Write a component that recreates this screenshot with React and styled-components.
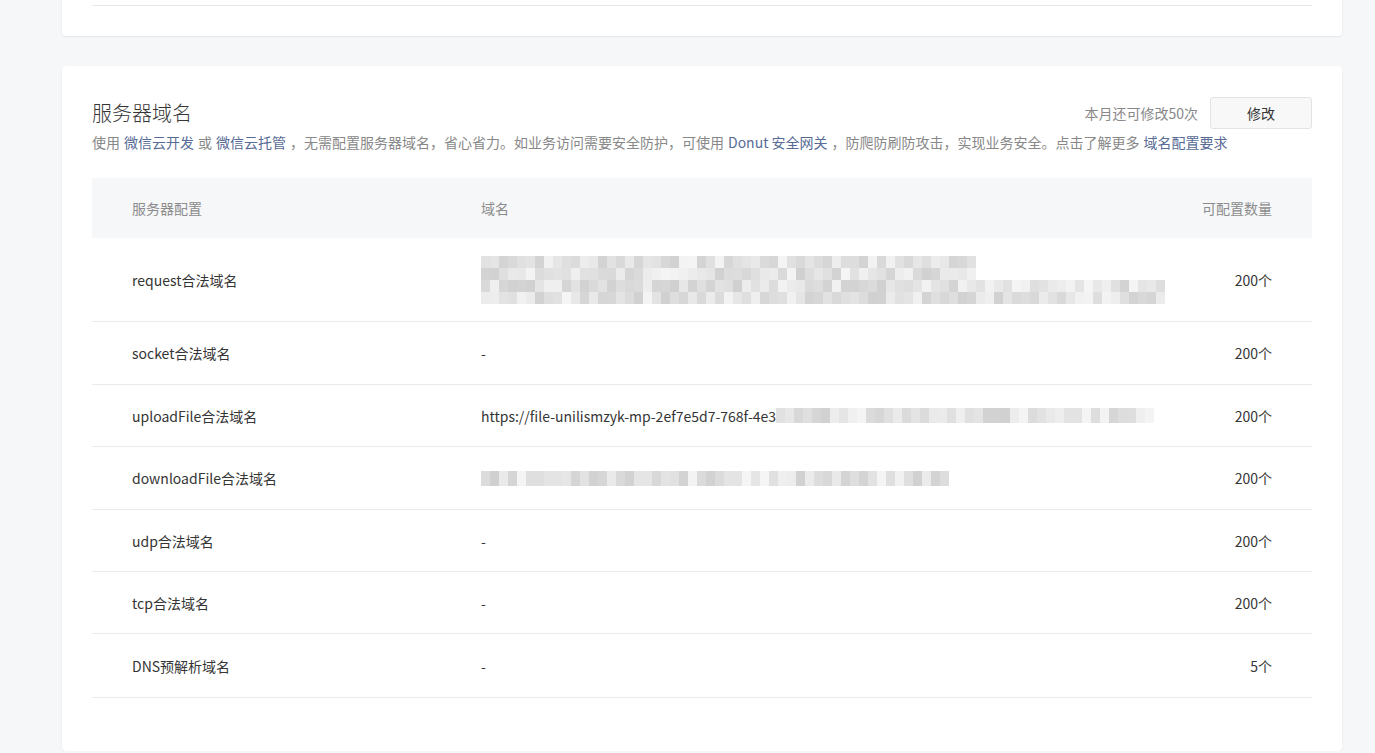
import styled, { createGlobalStyle } from 'styled-components';

const GlobalStyle = createGlobalStyle`
  html, body {
    margin: 0;
    padding: 0;
    background: #f6f7f9;
    font-family: "Noto Sans CJK SC", "Noto Sans", sans-serif;
    color: #353535;
    overflow: hidden;
  }
`;

const Page = styled.div`
  padding-left: 62px;
  width: 1280px;
  display: flex;
  flex-direction: column;
  gap: 30px;
`;

const Card = styled.section`
  background: #fff;
  border-radius: 4px;
  box-shadow: 0 1px 2px rgba(0, 0, 0, 0.08);
  padding: ${(p) => p.$pad};
  margin-top: ${(p) => p.$offset || 0};
`;

const Divider = styled.div`
  height: 15px;
  border-bottom: 1px solid #e7e7e7;
`;

const Head = styled.div`
  display: flex;
  align-items: center;
  justify-content: space-between;
`;

const Title = styled.h2`
  margin: 0;
  font-size: 20px;
  font-weight: 300;
  line-height: 30px;
  color: #353535;
`;

const Quota = styled.div`
  display: flex;
  align-items: center;
  gap: 12px;
  font-size: 14px;
  color: #888;
`;

const Button = styled.button`
  width: 102px;
  height: 32px;
  border: 1px solid #e3e3e3;
  border-radius: 3px;
  background: #f8f8f8;
  color: #353535;
  font-family: inherit;
  font-size: 14px;
`;

const Desc = styled.p`
  margin: 3px 0 0;
  font-size: 14px;
  line-height: 20px;
  color: #888;
`;

const Link = styled.a`
  color: #576b95;
  text-decoration: none;
  margin: 0 4px;
`;

const Table = styled.div`
  margin-top: 26px;
`;

const Row = styled.div`
  display: grid;
  grid-template-columns: 389px 1fr 140px;
  align-items: center;
  box-sizing: border-box;
  height: ${(p) => p.$h}px;
  font-size: 14px;
  color: ${(p) => (p.$header ? '#8c8c8c' : '#353535')};
  background: ${(p) => (p.$header ? '#f6f7f9' : '#fff')};
  border-bottom: ${(p) => (p.$header ? 'none' : '1px solid #eaeaea')};
`;

const Cell = styled.div`
  padding-left: ${(p) => (p.$first ? '40px' : '0')};
  padding-right: ${(p) => (p.$last ? '40px' : '0')};
  display: flex;
  align-items: center;
  justify-content: ${(p) => (p.$last ? 'flex-end' : 'flex-start')};
  white-space: nowrap;
  overflow: hidden;
`;

function rand(seed) {
  let s = seed;
  return () => {
    s = (s * 9301 + 49297) % 233280;
    return s / 233280;
  };
}

// pixelated stand-in for the blurred domain values
function Mosaic({ bands, seed }) {
  const r = rand(seed);
  const cw = 9;
  let y = 0;
  const rects = [];
  bands.forEach((b) => {
    for (let row = 0; row < b.rows; row++) {
      for (let c = 0; c < Math.ceil(b.width / cw); c++) {
        const v = Math.round(208 + r() * 37);
        rects.push(
          <rect
            key={`${y}-${c}`}
            x={c * cw}
            y={y}
            width={cw}
            height={b.h}
            fill={`rgb(${v},${v},${v})`}
          />
        );
      }
      y += b.h;
    }
  });
  const w = Math.max(...bands.map((b) => b.width));
  return (
    <svg width={w} height={y} style={{ display: 'block' }}>
      {rects}
    </svg>
  );
}

const rows = [
  {
    name: 'request合法域名',
    h: 84,
    domain: (
      <Mosaic
        seed={7}
        bands={[
          { width: 491, rows: 2, h: 12 },
          { width: 684, rows: 2, h: 12 },
        ]}
      />
    ),
    count: '200个',
  },
  { name: 'socket合法域名', h: 63, domain: '-', count: '200个' },
  {
    name: 'uploadFile合法域名',
    h: 62,
    domain: (
      <>
        <span>https://file-unilismzyk-mp-2ef7e5d7-768f-4e3</span>
        <Mosaic seed={31} bands={[{ width: 378, rows: 1, h: 15 }]} />
      </>
    ),
    count: '200个',
  },
  {
    name: 'downloadFile合法域名',
    h: 63,
    domain: <Mosaic seed={53} bands={[{ width: 468, rows: 1, h: 15 }]} />,
    count: '200个',
  },
  { name: 'udp合法域名', h: 62, domain: '-', count: '200个' },
  { name: 'tcp合法域名', h: 62, domain: '-', count: '200个' },
  { name: 'DNS预解析域名', h: 64, domain: '-', count: '5个' },
];

export default function App() {
  return (
    <>
      <GlobalStyle />
      <Page>
        <Card $pad="0 30px 30px" $offset="-10px">
          <Divider />
        </Card>
        <Card $pad="31px 30px 53px">
          <Head>
            <Title>服务器域名</Title>
            <Quota>
              本月还可修改50次
              <Button>修改</Button>
            </Quota>
          </Head>
          <Desc>
            使用<Link>微信云开发</Link>或<Link>微信云托管</Link>，无需配置服务器域名，省心省力。如业务访问需要安全防护，可使用
            <Link>Donut 安全网关</Link>，防爬防刷防攻击，实现业务安全。点击了解更多
            <Link>域名配置要求</Link>
          </Desc>
          <Table>
            <Row $header $h={60}>
              <Cell $first>服务器配置</Cell>
              <Cell>域名</Cell>
              <Cell $last>可配置数量</Cell>
            </Row>
            {rows.map((r) => (
              <Row key={r.name} $h={r.h}>
                <Cell $first>{r.name}</Cell>
                <Cell>{r.domain}</Cell>
                <Cell $last>{r.count}</Cell>
              </Row>
            ))}
          </Table>
        </Card>
      </Page>
    </>
  );
}
